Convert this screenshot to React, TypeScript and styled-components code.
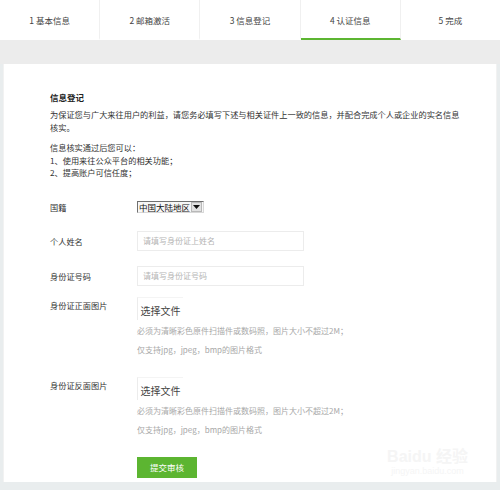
import styled, { createGlobalStyle } from 'styled-components'

const GlobalStyle = createGlobalStyle`
  html, body {
    margin: 0;
    padding: 0;
    background: #e9edee;
  }
  body {
    font-family: 'Noto Sans CJK SC', 'Noto Sans', sans-serif;
    color: #333;
  }
`

const steps = ['1 基本信息', '2 邮箱激活', '3 信息登记', '4 认证信息', '5 完成']

const App = () => {
  return (
    <Page>
      <GlobalStyle />
      <StepBar>
        {steps.map((s, i) => (
          <Step key={s} active={i === 3} last={i === steps.length - 1}>
            {s}
          </Step>
        ))}
      </StepBar>

      <Gap />

      <Card>
        <Title>信息登记</Title>
        <Paragraph>
          为保证您与广大来往用户的利益，请您务必填写下述与相关证件上一致的信息，并配合完成个人或企业的实名信息核实。
        </Paragraph>
        <List>
          <li>信息核实通过后您可以：</li>
          <li>1、使用来往公众平台的相关功能；</li>
          <li>2、提高账户可信任度；</li>
        </List>

        <Form>
          <Row top={0}>
            <Label>国籍</Label>
            <SelectBox>
              <SelectText>中国大陆地区</SelectText>
              <SelectArrow>
                <svg width="7" height="4" viewBox="0 0 7 4">
                  <path d="M0 0h7L3.5 4z" fill="#111" />
                </svg>
              </SelectArrow>
            </SelectBox>
          </Row>

          <Row top={18}>
            <Label>个人姓名</Label>
            <TextInput placeholder="请填写身份证上姓名" />
          </Row>

          <Row top={15}>
            <Label>身份证号码</Label>
            <TextInput placeholder="请填写身份证号码" />
          </Row>

          <UploadRow top={11}>
            <UploadLabel>身份证正面图片</UploadLabel>
            <UploadField>
              <FileButton>选择文件</FileButton>
              <Hint>必须为清晰彩色原件扫描件或数码照，图片大小不超过2M；</Hint>
              <Hint>仅支持jpg，jpeg，bmp的图片格式</Hint>
            </UploadField>
          </UploadRow>

          <UploadRow top={18}>
            <UploadLabel>身份证反面图片</UploadLabel>
            <UploadField>
              <FileButton>选择文件</FileButton>
              <Hint>必须为清晰彩色原件扫描件或数码照，图片大小不超过2M；</Hint>
              <Hint>仅支持jpg，jpeg，bmp的图片格式</Hint>
            </UploadField>
          </UploadRow>

          <SubmitRow>
            <SubmitButton>提交审核</SubmitButton>
          </SubmitRow>
        </Form>

        <Watermark>
          <WatermarkLogo>Baidu 经验</WatermarkLogo>
          <WatermarkUrl>jingyan.baidu.com</WatermarkUrl>
        </Watermark>
      </Card>
    </Page>
  )
}

const Page = styled.div`
  width: 500px;
  height: 490px;
  overflow: hidden;
  background: #e9edee;
`

const StepBar = styled.div`
  display: flex;
  height: 40px;
  background: #fff;
`

interface StepProps {
  active?: boolean
  last?: boolean
}

const Step = styled.div<StepProps>`
  flex: 1;
  display: flex;
  align-items: center;
  justify-content: center;
  box-sizing: border-box;
  font-size: 8.5px;
  color: #444;
  border-right: ${(props) => (props.last ? 'none' : '1px solid #f0f0f0')};
  border-bottom: 2px solid
    ${(props) => (props.active ? '#5cb531' : 'transparent')};
  padding-top: 2px;
`

const Gap = styled.div`
  height: 24px;
  background: #ececec;
`

const Card = styled.div`
  position: relative;
  box-sizing: border-box;
  margin: 0 3px;
  height: 418px;
  background: #fff;
  border-left: 1px solid #f2f2f2;
  border-right: 1px solid #f2f2f2;
  padding: 27px 24px 0 46px;
`

const Title = styled.div`
  font-size: 8.5px;
  font-weight: bold;
  color: #222;
  line-height: 12px;
  margin-bottom: 5px;
`

const Paragraph = styled.p`
  margin: 0;
  max-width: 410px;
  font-size: 8.2px;
  line-height: 13px;
  color: #333;
`

const List = styled.ul`
  list-style: none;
  margin: 7px 0 0;
  padding: 0;
  font-size: 8.2px;
  line-height: 12.5px;
  color: #333;
`

const Form = styled.div`
  display: flex;
  flex-direction: column;
  margin-top: 22px;
`

interface RowProps {
  top: number
}

const Row = styled.div<RowProps>`
  display: grid;
  grid-template-columns: 87px 1fr;
  align-items: center;
  margin-top: ${(props) => props.top}px;
`

const Label = styled.div`
  font-size: 8.2px;
  color: #333;
`

const SelectBox = styled.div`
  display: flex;
  align-items: center;
  justify-content: space-between;
  box-sizing: border-box;
  width: 67px;
  height: 12px;
  border: 1px solid #707070;
  border-right-color: #d8d8d8;
  border-bottom-color: #d8d8d8;
  background: #f7f7f7;
  padding-left: 1px;
`

const SelectText = styled.span`
  font-size: 8.5px;
  line-height: 10px;
  color: #111;
`

const SelectArrow = styled.span`
  display: flex;
  align-items: center;
  justify-content: center;
  width: 9px;
  height: 8px;
  margin-right: 1px;
  background: #e2e2e2;
  border: 1px solid #b8b8b8;
`

const TextInput = styled.input`
  box-sizing: border-box;
  width: 167px;
  height: 20px;
  border: 1px solid #ececec;
  padding: 0 5px;
  font-family: inherit;
  font-size: 8px;
  color: #333;
  outline: none;

  &::placeholder {
    color: #b5b5b5;
  }
`

const UploadRow = styled.div<RowProps>`
  display: grid;
  grid-template-columns: 87px 1fr;
  align-items: start;
  margin-top: ${(props) => props.top}px;
`

const UploadLabel = styled.div`
  font-size: 8.2px;
  line-height: 16px;
  color: #333;
`

const UploadField = styled.div`
  display: flex;
  flex-direction: column;
  align-items: flex-start;
`

const FileButton = styled.div`
  box-sizing: border-box;
  width: 46px;
  height: 23px;
  display: flex;
  align-items: center;
  justify-content: center;
  padding-top: 4px;
  font-size: 10px;
  color: #444;
  background: #fff;
  border-left: 1px solid #ececec;
  border-top: 1px solid #f4f4f4;
  margin-bottom: 1px;
`

const Hint = styled.div`
  font-size: 8px;
  line-height: 19px;
  color: #a8a8a8;
  white-space: nowrap;
`

const SubmitRow = styled.div`
  display: flex;
  padding-left: 87px;
  margin-top: 18px;
`

const SubmitButton = styled.div`
  width: 60px;
  height: 21px;
  display: flex;
  align-items: center;
  justify-content: center;
  background: #5cb531;
  color: #fff;
  font-size: 8.5px;
`

const Watermark = styled.div`
  position: absolute;
  right: 28px;
  bottom: 6px;
  display: flex;
  flex-direction: column;
  align-items: center;
  pointer-events: none;
`

const WatermarkLogo = styled.div`
  font-family: 'Liberation Sans', 'Noto Sans CJK SC', sans-serif;
  font-size: 16px;
  font-weight: bold;
  color: #f5f5f5;
  line-height: 18px;
`

const WatermarkUrl = styled.div`
  font-family: 'Liberation Sans', sans-serif;
  font-size: 9px;
  color: #f5f5f5;
`

export default App
